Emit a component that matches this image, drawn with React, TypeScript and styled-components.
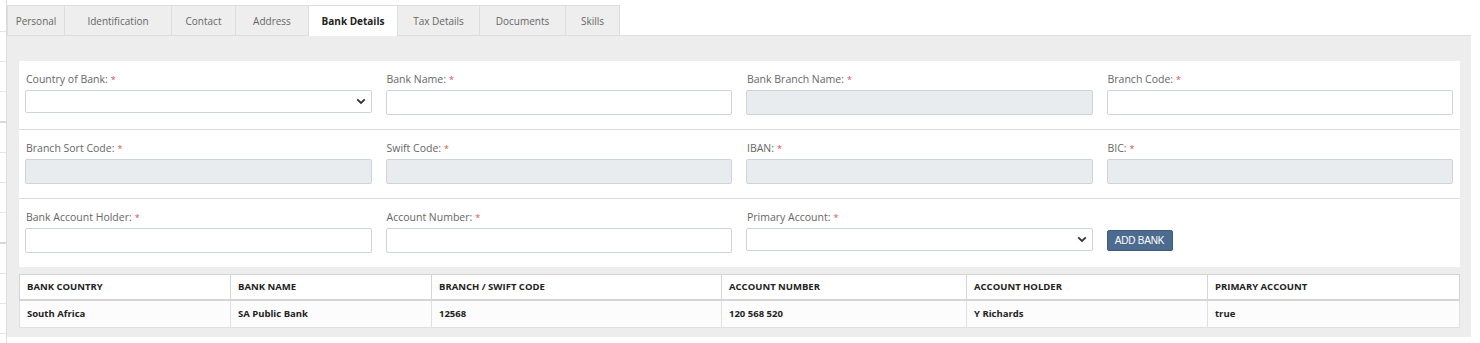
import styled, { createGlobalStyle } from "styled-components";

const GlobalStyle = createGlobalStyle`
  body {
    margin: 0;
    background: #fff;
    font-family: "Open Sans", "Liberation Sans", sans-serif;
  }
`;

const Page = styled.div`
  display: flex;
  width: 1480px;
  height: 343px;
  overflow: hidden;
`;

const SideStrip = styled.div`
  width: 6px;
  flex-shrink: 0;
  border-right: 1px solid #dcdcdc;
  padding-top: 2px;
`;

const StripRow = styled.div<{ $strong?: boolean }>`
  height: 29px;
  border-bottom: ${(p) => (p.$strong ? "2px solid #d8d8d8" : "1px solid #e4e4e4")};
`;

const Main = styled.div`
  flex: 1;
  min-width: 0;
  margin-right: 9px;
  padding-top: 5px;
`;

const TabBar = styled.div`
  display: flex;
  border-bottom: 1px solid #dddddd;
  height: 30px;
`;

const Tab = styled.div<{ $active?: boolean; $w: number }>`
  width: ${(p) => p.$w}px;
  box-sizing: border-box;
  display: flex;
  align-items: center;
  justify-content: center;
  font-size: 10px;
  color: ${(p) => (p.$active ? "#222" : "#666")};
  font-weight: ${(p) => (p.$active ? 700 : 400)};
  background: ${(p) => (p.$active ? "#fff" : "#eeeeee")};
  border: 1px solid #dddddd;
  border-left: none;
  border-bottom: none;
  margin-bottom: ${(p) => (p.$active ? "-1px" : "0")};
  height: ${(p) => (p.$active ? "31px" : "30px")};
  &:first-child {
    border-left: 1px solid #dddddd;
  }
`;

const Panel = styled.div`
  background: #ededed;
  padding: 25px 11px 9px 12px;
`;

const FormCard = styled.div`
  background: #fff;
`;

const FormRow = styled.div`
  display: grid;
  grid-template-columns: repeat(4, minmax(0, 1fr));
  column-gap: 14px;
  padding: 12px 7px 14px 6px;
  align-items: start;
  & + & {
    border-top: 1px solid #dddddd;
  }
`;

const Field = styled.div`
  display: flex;
  flex-direction: column;
`;

const Label = styled.label`
  font-size: 10.5px;
  line-height: 12px;
  height: 12px;
  color: #666;
  margin-bottom: 5px;
  padding-left: 1px;
`;

const Req = styled.span`
  color: #d9534f;
  margin-left: 3px;
  font-size: 9px;
`;

const Input = styled.div<{ $disabled?: boolean }>`
  height: 25px;
  box-sizing: border-box;
  border: 1px solid #ced4da;
  border-radius: 2px;
  background: ${(p) => (p.$disabled ? "#e9ecef" : "#fff")};
`;

const Select = styled.div`
  height: 23px;
  box-sizing: border-box;
  border: 1px solid #ced4da;
  border-radius: 2px;
  background: #fff;
  display: flex;
  align-items: center;
  justify-content: flex-end;
  padding-right: 5px;
`;

const ButtonCell = styled.div`
  display: flex;
  align-items: flex-start;
  padding-top: 19px;
`;

const AddButton = styled.button`
  height: 21px;
  width: 66px;
  padding: 0;
  background: #4d6b8f;
  border: 1px solid #3e5a7c;
  border-radius: 2px;
  color: #fff;
  font-family: "Liberation Sans", Arial, sans-serif;
  font-size: 10px;
  letter-spacing: -0.2px;
`;

const Table = styled.table`
  margin-top: 7px;
  width: 100%;
  border-collapse: collapse;
  border: 1px solid #cccccc;
  background: #fff;
  font-size: 9.5px;
  font-weight: 700;
  color: #222;
  table-layout: fixed;
`;

const Th = styled.th<{ $w: number }>`
  width: ${(p) => p.$w}px;
  height: 25px;
  box-sizing: border-box;
  text-align: left;
  padding: 0 7px;
  border: 1px solid #d4d4d4;
  border-bottom: 2px solid #d4d4d4;
  text-transform: uppercase;
  font-weight: 700;
`;

const Td = styled.td`
  height: 28px;
  box-sizing: border-box;
  padding: 0 7px;
  border: 1px solid #e0e0e0;
  background: #fcfcfc;
`;

const Chevron = () => (
  <svg width="10" height="7" viewBox="0 0 10 7">
    <path d="M1.2 1.3 L5 5 L8.8 1.3" fill="none" stroke="#333" strokeWidth="1.8" />
  </svg>
);

const tabs = [
  { label: "Personal", w: 58 },
  { label: "Identification", w: 107 },
  { label: "Contact", w: 64 },
  { label: "Address", w: 73 },
  { label: "Bank Details", w: 89, active: true },
  { label: "Tax Details", w: 82 },
  { label: "Documents", w: 86 },
  { label: "Skills", w: 54 },
];

const columns = [
  { label: "Bank Country", w: 211 },
  { label: "Bank Name", w: 201 },
  { label: "Branch / Swift Code", w: 290 },
  { label: "Account Number", w: 245 },
  { label: "Account Holder", w: 241 },
  { label: "Primary Account", w: 252 },
];

const banks = [
  ["South Africa", "SA Public Bank", "12568", "120 568 520", "Y Richards", "true"],
];

const FieldBox = ({ label, kind }: { label: string; kind: "input" | "disabled" | "select" }) => (
  <Field>
    <Label>
      {label}
      <Req>*</Req>
    </Label>
    {kind === "select" ? (
      <Select>
        <Chevron />
      </Select>
    ) : (
      <Input $disabled={kind === "disabled"} />
    )}
  </Field>
);

export default function App() {
  const strip = Array.from({ length: 11 }, (_, i) => i);
  return (
    <>
      <GlobalStyle />
      <Page>
        <SideStrip>
          {strip.map((i) => (
            <StripRow key={i} $strong={i === 3 || i === 7} />
          ))}
        </SideStrip>
        <Main>
          <TabBar>
            {tabs.map((t) => (
              <Tab key={t.label} $w={t.w} $active={t.active}>
                {t.label}
              </Tab>
            ))}
          </TabBar>
          <Panel>
            <FormCard>
              <FormRow>
                <FieldBox label="Country of Bank:" kind="select" />
                <FieldBox label="Bank Name:" kind="input" />
                <FieldBox label="Bank Branch Name:" kind="disabled" />
                <FieldBox label="Branch Code:" kind="input" />
              </FormRow>
              <FormRow>
                <FieldBox label="Branch Sort Code:" kind="disabled" />
                <FieldBox label="Swift Code:" kind="disabled" />
                <FieldBox label="IBAN:" kind="disabled" />
                <FieldBox label="BIC:" kind="disabled" />
              </FormRow>
              <FormRow>
                <FieldBox label="Bank Account Holder:" kind="input" />
                <FieldBox label="Account Number:" kind="input" />
                <FieldBox label="Primary Account:" kind="select" />
                <ButtonCell>
                  <AddButton>ADD BANK</AddButton>
                </ButtonCell>
              </FormRow>
            </FormCard>
            <Table>
              <thead>
                <tr>
                  {columns.map((c) => (
                    <Th key={c.label} $w={c.w}>
                      {c.label}
                    </Th>
                  ))}
                </tr>
              </thead>
              <tbody>
                {banks.map((row, i) => (
                  <tr key={i}>
                    {row.map((cell, j) => (
                      <Td key={j}>{cell}</Td>
                    ))}
                  </tr>
                ))}
              </tbody>
            </Table>
          </Panel>
        </Main>
      </Page>
    </>
  );
}
